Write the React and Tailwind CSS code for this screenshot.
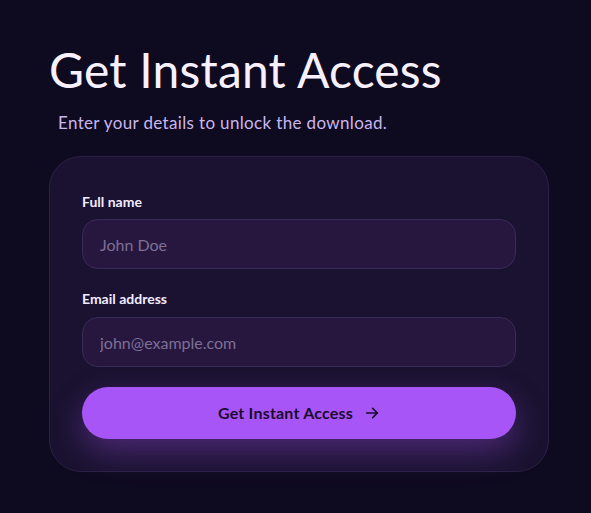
import React, { useState } from 'react';

const App = () => {
  const [form, setForm] = useState({ name: '', email: '' });

  const handleChange = (e) => {
    setForm(prev => ({ ...prev, [e.target.name]: e.target.value }));
  };

  return (
    <div
      className="min-h-screen w-full bg-[#0e0a1f] px-[49px] pt-[44px]"
      style={{ fontFamily: '"Lato", "Inter", sans-serif' }}
    >
      <h1 className="text-[48px] font-normal leading-[52px] tracking-[0.2px] text-[#f7f1ff]">
        Get Instant Access
      </h1>
      <p className="mt-[15px] pl-[9px] text-[17px] leading-6 tracking-[0.35px] text-[#c9b6ee]">
        Enter your details to unlock the download.
      </p>

      <form
        onSubmit={(e) => e.preventDefault()}
        className="mt-[21px] w-[500px] rounded-[32px] border border-[#2c2046] bg-[#1a1230] px-[32px] pb-[32px] pt-[37px]"
      >
        <label className="block text-[14px] font-bold leading-4 text-[#f3ecff]">Full name</label>
        <input
          name="name"
          value={form.name}
          onChange={handleChange}
          placeholder="John Doe"
          className="mt-[9px] h-[50px] w-full rounded-[16px] border border-[#3a2a56] bg-[#27173f] px-[17px] text-[16px] text-[#e9e0ff] outline-none placeholder:text-[#7d6f96]"
        />

        <label className="mt-[22px] block text-[14px] font-bold leading-4 text-[#f3ecff]">Email address</label>
        <input
          name="email"
          value={form.email}
          onChange={handleChange}
          placeholder="john@example.com"
          className="mt-[10px] h-[50px] w-full rounded-[16px] border border-[#3a2a56] bg-[#27173f] px-[17px] text-[16px] text-[#e9e0ff] outline-none placeholder:text-[#7d6f96]"
        />

        <button
          type="submit"
          className="mt-[20px] flex h-[52px] w-full items-center justify-center gap-[11px] rounded-full bg-[#a855f7] text-[16px] font-bold tracking-[0.2px] text-[#1a0b2e] shadow-[0_12px_32px_rgba(168,85,247,0.35)]"
        >
          Get Instant Access
          <svg width="16" height="16" viewBox="0 0 24 24" fill="none" stroke="currentColor" strokeWidth="2.4" strokeLinecap="round" strokeLinejoin="round">
            <path d="M4 12h16" />
            <path d="M13 5l7 7-7 7" />
          </svg>
        </button>
      </form>
    </div>
  );
};

export default App;
